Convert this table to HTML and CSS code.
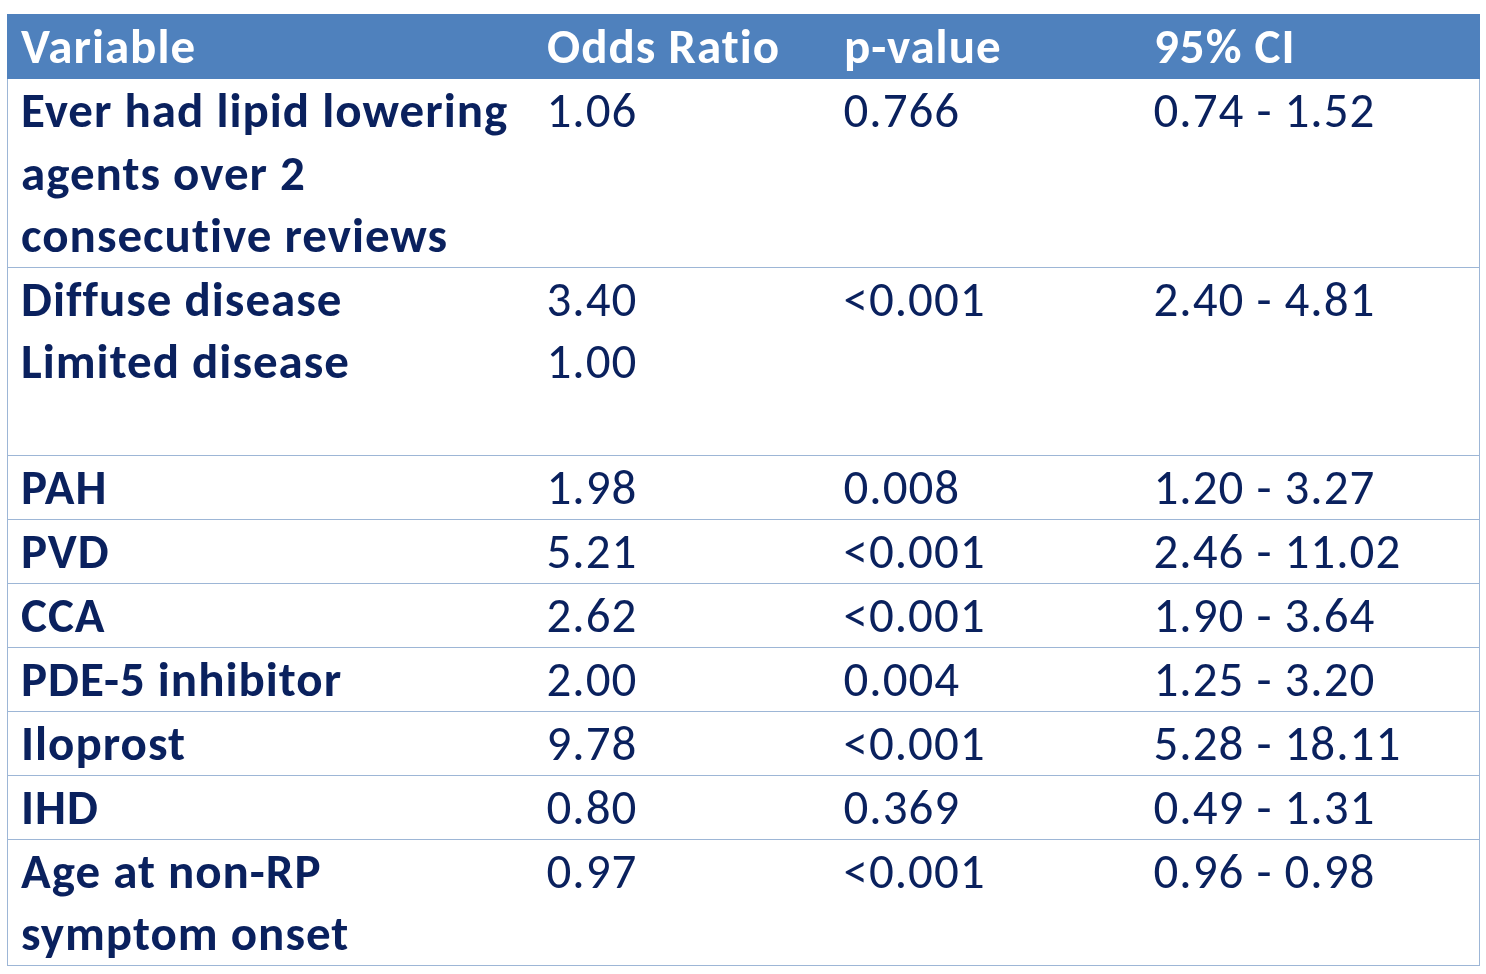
FILE: index.html
```html
<!DOCTYPE html>
<html>
<head>
<meta charset="utf-8">
<link rel="stylesheet" href="styles.css">
</head>
<body>
<table class="or-table">
  <colgroup>
    <col class="c-var"><col class="c-or"><col class="c-p"><col class="c-ci">
  </colgroup>
  <thead>
    <tr class="head"><th>Variable</th><th>Odds Ratio</th><th>p-value</th><th>95% CI</th></tr>
  </thead>
  <tbody>
    <tr class="r3"><td class="var">Ever had lipid lowering<br>agents over 2<br>consecutive reviews</td><td>1.06</td><td>0.766</td><td>0.74 - 1.52</td></tr>
    <tr class="r3"><td class="var">Diffuse disease<br>Limited disease</td><td>3.40<br>1.00</td><td>&lt;0.001</td><td>2.40 - 4.81</td></tr>
    <tr class="r1"><td class="var">PAH</td><td>1.98</td><td>0.008</td><td>1.20 - 3.27</td></tr>
    <tr class="r1"><td class="var">PVD</td><td>5.21</td><td>&lt;0.001</td><td>2.46 - 11.02</td></tr>
    <tr class="r1"><td class="var">CCA</td><td>2.62</td><td>&lt;0.001</td><td>1.90 - 3.64</td></tr>
    <tr class="r1"><td class="var">PDE-5 inhibitor</td><td>2.00</td><td>0.004</td><td>1.25 - 3.20</td></tr>
    <tr class="r1"><td class="var">Iloprost</td><td>9.78</td><td>&lt;0.001</td><td>5.28 - 18.11</td></tr>
    <tr class="r1"><td class="var">IHD</td><td>0.80</td><td>0.369</td><td>0.49 - 1.31</td></tr>
    <tr class="r2"><td class="var">Age at non-RP<br>symptom onset</td><td>0.97</td><td>&lt;0.001</td><td>0.96 - 0.98</td></tr>
  </tbody>
</table>
</body>
</html>
```

FILE: styles.css
```css
html, body {
  margin: 0;
  padding: 0;
  background: #ffffff;
}
body {
  padding: 14px 0 0 7px;
}
.or-table {
  border-collapse: collapse;
  table-layout: fixed;
  width: 1472px;
  font-family: "Carlito", "Lato", "Open Sans", sans-serif;
  font-size: 49px;
  letter-spacing: 1px;
  color: #0a215e;
}
.c-var { width: 526px; }
.c-or { width: 297px; }
.c-p { width: 310px; }
.c-ci { width: 339px; }
.or-table th,
.or-table td {
  padding: 0 0 0 13px;
  text-align: left;
  vertical-align: top;
  line-height: 62.5px;
  border: 1px solid #9db6d6;
  white-space: nowrap;
}
.or-table th {
  background: #4f81bd;
  color: #ffffff;
  font-weight: 700;
  height: 62px;
  line-height: 63px;
  border-color: #4f81bd;
}
.or-table td {
  border-left: none;
  border-right: none;
  font-weight: 400;
}
.or-table td:first-child { border-left: 1px solid #9db6d6; }
.or-table td:last-child { border-right: 1px solid #9db6d6; }
.or-table td.var { font-weight: 700; }
.r1 td { height: 63px; }
.r2 td { height: 125px; }
.r3 td { height: 187px; }
```
